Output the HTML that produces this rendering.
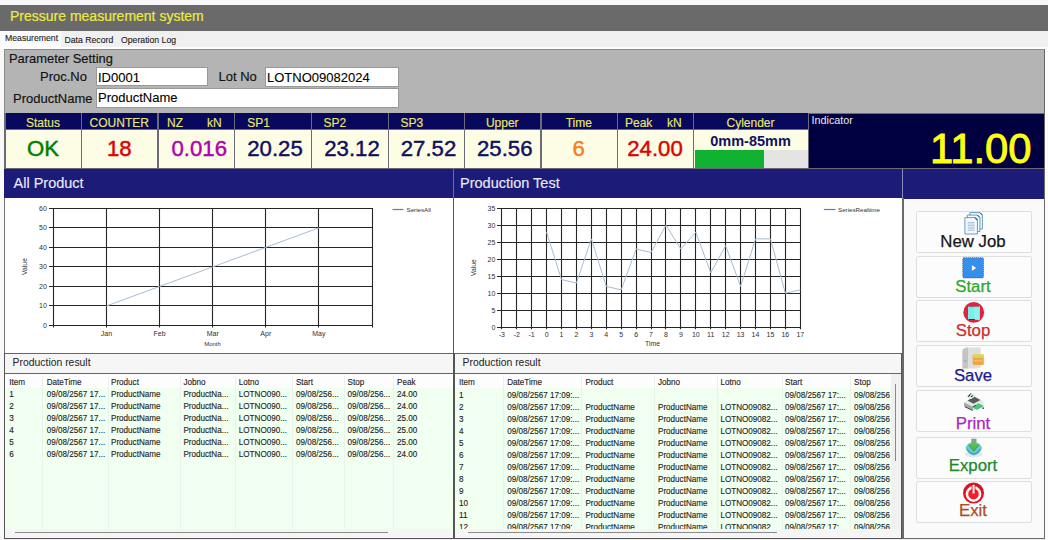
<!DOCTYPE html>
<html><head><meta charset="utf-8">
<style>
*{margin:0;padding:0;box-sizing:border-box}
html,body{width:1048px;height:540px;overflow:hidden;background:#f0f0f0;font-family:"Liberation Sans",sans-serif;position:relative}
.a{position:absolute;white-space:nowrap}
.t{position:absolute;white-space:nowrap;line-height:1}
svg text{font-family:"Liberation Sans",sans-serif}
.tt{position:absolute;white-space:nowrap;line-height:1;font-size:8.1px;color:#1e1e1e;-webkit-text-stroke:0.12px currentColor;transform:scaleY(1.15);transform-origin:0 0}
</style></head><body>
<!-- top strip -->
<div class="a" style="left:0;top:0;width:1048px;height:5px;background:#f7f7f7"></div>
<!-- title bar -->
<div class="a" style="left:0;top:5px;width:1048px;height:26px;background:#6a6a6a"></div>
<div class="t" style="left:10px;top:9px;font-size:14px;-webkit-text-stroke:0.2px currentColor;color:#eaea44">Pressure measurement system</div>
<!-- tabs -->
<div class="a" style="left:0;top:31px;width:1048px;height:17px;background:#f0f0f0"></div>
<div class="a" style="left:0;top:31px;width:61px;height:16px;background:#fbfbfb"></div>
<div class="t" style="left:5px;top:34px;font-size:8.7px;-webkit-text-stroke:0.1px currentColor;color:#1a1a1a">Measurement</div>
<div class="t" style="left:64.5px;top:35.5px;font-size:8.7px;-webkit-text-stroke:0.1px currentColor;color:#1a1a1a">Data Record</div>
<div class="t" style="left:121px;top:35.5px;font-size:8.7px;-webkit-text-stroke:0.1px currentColor;color:#1a1a1a">Operation Log</div>
<!-- main gray panel -->
<div class="a" style="left:0;top:47px;width:1048px;height:1.5px;background:#fdfdfd"></div>
<div class="a" style="left:0;top:48px;width:4px;height:492px;background:#f9f9f9"></div>
<div class="a" style="left:4px;top:48.8px;width:1041px;height:490.2px;background:#b4b4b4;border:1px solid #8a8a8a;border-right-color:#666"></div>
<div class="a" style="left:1045px;top:48px;width:3px;height:492px;background:#fcfcfc"></div>
<div class="t" style="left:9px;top:53px;font-size:12.9px;-webkit-text-stroke:0.15px currentColor;color:#111">Parameter Setting</div>
<div class="t" style="right:961px;top:69.7px;font-size:13px;-webkit-text-stroke:0.15px currentColor;color:#111">Proc.No</div>
<div class="a" style="left:96px;top:67px;width:112px;height:19px;background:#fff;border:1px solid #999"></div>
<div class="t" style="left:98px;top:70.6px;font-size:13px;-webkit-text-stroke:0.1px currentColor;color:#000">ID0001</div>
<div class="t" style="left:218.5px;top:69.5px;font-size:13px;-webkit-text-stroke:0.15px currentColor;color:#111">Lot No</div>
<div class="a" style="left:265px;top:67px;width:134px;height:20px;background:#fff;border:1px solid #999"></div>
<div class="t" style="left:267px;top:70.6px;font-size:13px;-webkit-text-stroke:0.1px currentColor;color:#000">LOTNO09082024</div>
<div class="t" style="left:13px;top:92px;font-size:13px;-webkit-text-stroke:0.15px currentColor;color:#111">ProductName</div>
<div class="a" style="left:96px;top:88px;width:303px;height:20px;background:#fff;border:1px solid #999"></div>
<div class="t" style="left:98px;top:91.3px;font-size:13px;-webkit-text-stroke:0.1px currentColor;color:#000">ProductName</div>
<!-- status row -->
<div class="a" style="left:4px;top:113px;width:1040px;height:56px;background:#6a6a78"></div>
<div class="a" style="left:6px;top:113px;width:74.5px;height:16px;background:#08085c"></div>
<div class="t" style="left:5px;top:116.5px;width:76px;text-align:center;font-size:12px;-webkit-text-stroke:0.15px currentColor;color:#e8e866">Status</div>
<div class="a" style="left:6px;top:130px;width:74.5px;height:38px;background:#fdfde6"></div>
<div class="t" style="left:5px;top:137.5px;width:76px;text-align:center;font-size:22.2px;-webkit-text-stroke:0.45px currentColor;color:#008000">OK</div>
<div class="a" style="left:82px;top:113px;width:75.0px;height:16px;background:#08085c"></div>
<div class="t" style="left:81px;top:116.5px;width:76.5px;text-align:center;font-size:12px;-webkit-text-stroke:0.15px currentColor;color:#e8e866">COUNTER</div>
<div class="a" style="left:82px;top:130px;width:75.0px;height:38px;background:#fdfde6"></div>
<div class="t" style="left:81px;top:137.5px;width:76.5px;text-align:center;font-size:22.2px;-webkit-text-stroke:0.45px currentColor;color:#e00000">18</div>
<div class="a" style="left:158.5px;top:113px;width:75.0px;height:16px;background:#08085c"></div>
<div class="a" style="left:158.5px;top:130px;width:75.0px;height:38px;background:#fdfde6"></div>
<div class="t" style="left:161px;top:137.5px;width:76.5px;text-align:center;font-size:22.2px;-webkit-text-stroke:0.45px currentColor;color:#b000b0">0.016</div>
<div class="a" style="left:235px;top:113px;width:75.5px;height:16px;background:#08085c"></div>
<div class="t" style="left:247.3px;top:116.5px;font-size:12px;-webkit-text-stroke:0.15px currentColor;color:#e8e866">SP1</div>
<div class="a" style="left:235px;top:130px;width:75.5px;height:38px;background:#fdfde6"></div>
<div class="t" style="left:236.5px;top:137.5px;width:77px;text-align:center;font-size:22.2px;-webkit-text-stroke:0.45px currentColor;color:#101060">20.25</div>
<div class="a" style="left:312px;top:113px;width:75.5px;height:16px;background:#08085c"></div>
<div class="t" style="left:323.5px;top:116.5px;font-size:12px;-webkit-text-stroke:0.15px currentColor;color:#e8e866">SP2</div>
<div class="a" style="left:312px;top:130px;width:75.5px;height:38px;background:#fdfde6"></div>
<div class="t" style="left:313.5px;top:137.5px;width:77px;text-align:center;font-size:22.2px;-webkit-text-stroke:0.45px currentColor;color:#101060">23.12</div>
<div class="a" style="left:389px;top:113px;width:74.5px;height:16px;background:#08085c"></div>
<div class="t" style="left:400.5px;top:116.5px;font-size:12px;-webkit-text-stroke:0.15px currentColor;color:#e8e866">SP3</div>
<div class="a" style="left:389px;top:130px;width:74.5px;height:38px;background:#fdfde6"></div>
<div class="t" style="left:390.5px;top:137.5px;width:76px;text-align:center;font-size:22.2px;-webkit-text-stroke:0.45px currentColor;color:#101060">27.52</div>
<div class="a" style="left:465px;top:113px;width:75.0px;height:16px;background:#08085c"></div>
<div class="t" style="left:464px;top:116.5px;width:76.5px;text-align:center;font-size:12px;-webkit-text-stroke:0.15px currentColor;color:#e8e866">Upper</div>
<div class="a" style="left:465px;top:130px;width:75.0px;height:38px;background:#fdfde6"></div>
<div class="t" style="left:466.5px;top:137.5px;width:76.5px;text-align:center;font-size:22.2px;-webkit-text-stroke:0.45px currentColor;color:#101060">25.56</div>
<div class="a" style="left:541.5px;top:113px;width:75.0px;height:16px;background:#08085c"></div>
<div class="t" style="left:540.5px;top:116.5px;width:76.5px;text-align:center;font-size:12px;-webkit-text-stroke:0.15px currentColor;color:#e8e866">Time</div>
<div class="a" style="left:541.5px;top:130px;width:75.0px;height:38px;background:#fdfde6"></div>
<div class="t" style="left:540.5px;top:137.5px;width:76.5px;text-align:center;font-size:22.2px;-webkit-text-stroke:0.45px currentColor;color:#f08020">6</div>
<div class="a" style="left:618px;top:113px;width:74.5px;height:16px;background:#08085c"></div>
<div class="a" style="left:618px;top:130px;width:74.5px;height:38px;background:#fdfde6"></div>
<div class="t" style="left:617px;top:137.5px;width:76px;text-align:center;font-size:22.2px;-webkit-text-stroke:0.45px currentColor;color:#e00000">24.00</div>
<div class="t" style="left:167px;top:116.5px;font-size:12px;-webkit-text-stroke:0.15px currentColor;color:#e8e866">NZ</div>
<div class="t" style="left:207px;top:116.5px;font-size:12px;-webkit-text-stroke:0.15px currentColor;color:#e8e866">kN</div>
<div class="t" style="left:625px;top:116.5px;font-size:12px;-webkit-text-stroke:0.15px currentColor;color:#e8e866">Peak</div>
<div class="t" style="left:667px;top:116.5px;font-size:12px;-webkit-text-stroke:0.15px currentColor;color:#e8e866">kN</div>
<div class="a" style="left:694px;top:113px;width:113.5px;height:16px;background:#08085c"></div>
<div class="t" style="left:693px;top:116.5px;width:115px;text-align:center;font-size:12px;-webkit-text-stroke:0.15px currentColor;color:#e8e866">Cylender</div>
<div class="a" style="left:694px;top:130px;width:113.5px;height:38px;background:#fdfde6"></div>
<div class="t" style="left:693px;top:134px;width:115px;text-align:center;font-size:14.5px;font-weight:bold;color:#101060">0mm-85mm</div>
<div class="a" style="left:694.5px;top:149.5px;width:113px;height:18px;background:#e4e4e4"></div>
<div class="a" style="left:694.5px;top:149.5px;width:69.5px;height:18px;background:#10b030"></div>
<div class="a" style="left:808.5px;top:113.5px;width:235.5px;height:54.5px;background:#000040"></div>
<div class="t" style="left:811.5px;top:115px;font-size:10.8px;color:#e8e8f0">Indicator</div>
<div class="t" style="left:930px;top:128.3px;font-size:41.8px;-webkit-text-stroke:0.9px currentColor;color:#ffff10">11.00</div>
<!-- blue bars -->
<div class="a" style="left:4px;top:169px;width:1040px;height:29.5px;background:#1c1c78"></div>
<div class="a" style="left:453px;top:169px;width:1px;height:29.5px;background:#6a6aa8"></div>
<div class="a" style="left:902px;top:169px;width:1px;height:29.5px;background:#8a8ab8"></div>
<div class="t" style="left:13.5px;top:176px;font-size:14.5px;-webkit-text-stroke:0.15px currentColor;color:#e8e8f4">All Product</div>
<div class="t" style="left:460px;top:176px;font-size:14.5px;-webkit-text-stroke:0.15px currentColor;color:#e8e8f4">Production Test</div>
<div class="a" style="left:4px;top:198.4px;width:449.5px;height:155.6px;background:#fff;border-left:1px solid #777"></div>
<div class="a" style="left:453px;top:198.4px;width:449.5px;height:155.6px;background:#fff;border-left:1px solid #555;border-right:1px solid #777"></div>
<svg class="a" style="left:0;top:0" width="1048" height="540">
<line x1="49.00" y1="208.50" x2="373.00" y2="208.50" stroke="#262626" stroke-width="1.1"/>
<line x1="49.00" y1="227.50" x2="373.00" y2="227.50" stroke="#262626" stroke-width="1.1"/>
<line x1="49.00" y1="247.50" x2="373.00" y2="247.50" stroke="#262626" stroke-width="1.1"/>
<line x1="49.00" y1="266.50" x2="373.00" y2="266.50" stroke="#262626" stroke-width="1.1"/>
<line x1="49.00" y1="286.50" x2="373.00" y2="286.50" stroke="#262626" stroke-width="1.1"/>
<line x1="49.00" y1="305.50" x2="373.00" y2="305.50" stroke="#262626" stroke-width="1.1"/>
<line x1="49.00" y1="325.50" x2="373.00" y2="325.50" stroke="#262626" stroke-width="1.1"/>
<line x1="53.50" y1="208.00" x2="53.50" y2="327.50" stroke="#262626" stroke-width="1.1"/>
<line x1="106.50" y1="208.00" x2="106.50" y2="327.50" stroke="#262626" stroke-width="1.1"/>
<line x1="159.50" y1="208.00" x2="159.50" y2="327.50" stroke="#262626" stroke-width="1.1"/>
<line x1="212.50" y1="208.00" x2="212.50" y2="327.50" stroke="#262626" stroke-width="1.1"/>
<line x1="265.50" y1="208.00" x2="265.50" y2="327.50" stroke="#262626" stroke-width="1.1"/>
<line x1="318.50" y1="208.00" x2="318.50" y2="327.50" stroke="#262626" stroke-width="1.1"/>
<line x1="372.50" y1="208.00" x2="372.50" y2="327.50" stroke="#262626" stroke-width="1.1"/>
<text x="46.90" y="328.00" text-anchor="end" font-size="7" fill="#303030">0</text>
<text x="46.90" y="308.47" text-anchor="end" font-size="7" fill="#303030">10</text>
<text x="46.90" y="288.93" text-anchor="end" font-size="7" fill="#303030">20</text>
<text x="46.90" y="269.40" text-anchor="end" font-size="7" fill="#303030">30</text>
<text x="46.90" y="249.87" text-anchor="end" font-size="7" fill="#303030">40</text>
<text x="46.90" y="230.33" text-anchor="end" font-size="7" fill="#303030">50</text>
<text x="46.90" y="210.80" text-anchor="end" font-size="7" fill="#303030">60</text>
<text x="106.50" y="335.50" text-anchor="middle" font-size="7" fill="#303030">Jan</text>
<text x="159.60" y="335.50" text-anchor="middle" font-size="7" fill="#303030">Feb</text>
<text x="212.70" y="335.50" text-anchor="middle" font-size="7" fill="#303030">Mar</text>
<text x="265.80" y="335.50" text-anchor="middle" font-size="7" fill="#303030">Apr</text>
<text x="318.90" y="335.50" text-anchor="middle" font-size="7" fill="#303030">May</text>
<text x="212.50" y="345.50" text-anchor="middle" font-size="6" fill="#303030">Month</text>
<text x="25.00" y="266.50" text-anchor="middle" font-size="6.8" fill="#303030" transform="rotate(-90 25.00 266.50)" dy="2">Value</text>
<polyline points="106.50,305.97 159.60,286.43 212.70,266.90 265.80,247.37 318.90,227.83" fill="none" stroke="#a8bcd0" stroke-width="1"/>
<line x1="392.5" y1="209.5" x2="403.5" y2="209.5" stroke="#4f81bd" stroke-width="1.2"/>
<text x="406.5" y="211.8" font-size="6.2" fill="#303030">SeriesAll</text>
</svg>
<svg class="a" style="left:0;top:0" width="1048" height="540">
<line x1="497.00" y1="208.50" x2="801.00" y2="208.50" stroke="#262626" stroke-width="1.1"/>
<line x1="497.00" y1="225.50" x2="801.00" y2="225.50" stroke="#262626" stroke-width="1.1"/>
<line x1="497.00" y1="242.50" x2="801.00" y2="242.50" stroke="#262626" stroke-width="1.1"/>
<line x1="497.00" y1="259.50" x2="801.00" y2="259.50" stroke="#262626" stroke-width="1.1"/>
<line x1="497.00" y1="276.50" x2="801.00" y2="276.50" stroke="#262626" stroke-width="1.1"/>
<line x1="497.00" y1="293.50" x2="801.00" y2="293.50" stroke="#262626" stroke-width="1.1"/>
<line x1="497.00" y1="310.50" x2="801.00" y2="310.50" stroke="#262626" stroke-width="1.1"/>
<line x1="497.00" y1="327.50" x2="801.00" y2="327.50" stroke="#262626" stroke-width="1.1"/>
<line x1="501.50" y1="208.00" x2="501.50" y2="329.20" stroke="#262626" stroke-width="1.1"/>
<line x1="516.50" y1="208.00" x2="516.50" y2="329.20" stroke="#262626" stroke-width="1.1"/>
<line x1="531.50" y1="208.00" x2="531.50" y2="329.20" stroke="#262626" stroke-width="1.1"/>
<line x1="546.50" y1="208.00" x2="546.50" y2="329.20" stroke="#262626" stroke-width="1.1"/>
<line x1="561.50" y1="208.00" x2="561.50" y2="329.20" stroke="#262626" stroke-width="1.1"/>
<line x1="576.50" y1="208.00" x2="576.50" y2="329.20" stroke="#262626" stroke-width="1.1"/>
<line x1="591.50" y1="208.00" x2="591.50" y2="329.20" stroke="#262626" stroke-width="1.1"/>
<line x1="606.50" y1="208.00" x2="606.50" y2="329.20" stroke="#262626" stroke-width="1.1"/>
<line x1="621.50" y1="208.00" x2="621.50" y2="329.20" stroke="#262626" stroke-width="1.1"/>
<line x1="636.50" y1="208.00" x2="636.50" y2="329.20" stroke="#262626" stroke-width="1.1"/>
<line x1="651.50" y1="208.00" x2="651.50" y2="329.20" stroke="#262626" stroke-width="1.1"/>
<line x1="665.50" y1="208.00" x2="665.50" y2="329.20" stroke="#262626" stroke-width="1.1"/>
<line x1="680.50" y1="208.00" x2="680.50" y2="329.20" stroke="#262626" stroke-width="1.1"/>
<line x1="695.50" y1="208.00" x2="695.50" y2="329.20" stroke="#262626" stroke-width="1.1"/>
<line x1="710.50" y1="208.00" x2="710.50" y2="329.20" stroke="#262626" stroke-width="1.1"/>
<line x1="725.50" y1="208.00" x2="725.50" y2="329.20" stroke="#262626" stroke-width="1.1"/>
<line x1="740.50" y1="208.00" x2="740.50" y2="329.20" stroke="#262626" stroke-width="1.1"/>
<line x1="755.50" y1="208.00" x2="755.50" y2="329.20" stroke="#262626" stroke-width="1.1"/>
<line x1="770.50" y1="208.00" x2="770.50" y2="329.20" stroke="#262626" stroke-width="1.1"/>
<line x1="785.50" y1="208.00" x2="785.50" y2="329.20" stroke="#262626" stroke-width="1.1"/>
<line x1="800.50" y1="208.00" x2="800.50" y2="329.20" stroke="#262626" stroke-width="1.1"/>
<text x="495.30" y="329.70" text-anchor="end" font-size="7" fill="#303030">0</text>
<text x="495.30" y="312.71" text-anchor="end" font-size="7" fill="#303030">5</text>
<text x="495.30" y="295.73" text-anchor="end" font-size="7" fill="#303030">10</text>
<text x="495.30" y="278.74" text-anchor="end" font-size="7" fill="#303030">15</text>
<text x="495.30" y="261.76" text-anchor="end" font-size="7" fill="#303030">20</text>
<text x="495.30" y="244.77" text-anchor="end" font-size="7" fill="#303030">25</text>
<text x="495.30" y="227.79" text-anchor="end" font-size="7" fill="#303030">30</text>
<text x="495.30" y="210.80" text-anchor="end" font-size="7" fill="#303030">35</text>
<text x="501.80" y="337.20" text-anchor="middle" font-size="7" fill="#303030">-3</text>
<text x="516.73" y="337.20" text-anchor="middle" font-size="7" fill="#303030">-2</text>
<text x="531.65" y="337.20" text-anchor="middle" font-size="7" fill="#303030">-1</text>
<text x="546.58" y="337.20" text-anchor="middle" font-size="7" fill="#303030">0</text>
<text x="561.50" y="337.20" text-anchor="middle" font-size="7" fill="#303030">1</text>
<text x="576.42" y="337.20" text-anchor="middle" font-size="7" fill="#303030">2</text>
<text x="591.35" y="337.20" text-anchor="middle" font-size="7" fill="#303030">3</text>
<text x="606.27" y="337.20" text-anchor="middle" font-size="7" fill="#303030">4</text>
<text x="621.20" y="337.20" text-anchor="middle" font-size="7" fill="#303030">5</text>
<text x="636.12" y="337.20" text-anchor="middle" font-size="7" fill="#303030">6</text>
<text x="651.05" y="337.20" text-anchor="middle" font-size="7" fill="#303030">7</text>
<text x="665.97" y="337.20" text-anchor="middle" font-size="7" fill="#303030">8</text>
<text x="680.90" y="337.20" text-anchor="middle" font-size="7" fill="#303030">9</text>
<text x="695.83" y="337.20" text-anchor="middle" font-size="7" fill="#303030">10</text>
<text x="710.75" y="337.20" text-anchor="middle" font-size="7" fill="#303030">11</text>
<text x="725.67" y="337.20" text-anchor="middle" font-size="7" fill="#303030">12</text>
<text x="740.60" y="337.20" text-anchor="middle" font-size="7" fill="#303030">13</text>
<text x="755.52" y="337.20" text-anchor="middle" font-size="7" fill="#303030">14</text>
<text x="770.45" y="337.20" text-anchor="middle" font-size="7" fill="#303030">15</text>
<text x="785.38" y="337.20" text-anchor="middle" font-size="7" fill="#303030">16</text>
<text x="800.30" y="337.20" text-anchor="middle" font-size="7" fill="#303030">17</text>
<text x="652.50" y="346.20" text-anchor="middle" font-size="6.8" fill="#303030">Time</text>
<text x="474.00" y="267.60" text-anchor="middle" font-size="6.8" fill="#303030" transform="rotate(-90 474.00 267.60)" dy="2">Value</text>
<polyline points="546.58,232.08 561.50,279.64 576.42,283.04 591.35,238.87 606.27,286.43 621.20,289.83 636.12,249.07 651.05,252.46 665.97,225.29 680.90,249.07 695.83,232.08 710.75,272.85 725.67,245.67 740.60,286.43 755.52,238.87 770.45,238.87 785.38,293.23 800.30,289.83" fill="none" stroke="#a8bcd0" stroke-width="1"/>
<line x1="823.8" y1="209.5" x2="835.6" y2="209.5" stroke="#4f81bd" stroke-width="1.2"/>
<text x="838" y="211.8" font-size="6.2" fill="#303030">SeriesRealtime</text>
</svg>
<div class="a" style="left:5px;top:353.5px;width:448px;height:185px;background:#f0fff0"></div>
<div class="a" style="left:5px;top:353.5px;width:448px;height:20px;background:#f6f6f6"></div>
<div class="t" style="left:12.6px;top:357.5px;font-size:10.4px;color:#222">Production result</div>
<div class="a" style="left:5px;top:374px;width:448px;height:13.5px;background:#fdfdfd"></div>
<div class="a" style="left:42.2px;top:375px;width:1px;height:154px;background:#eaf3ea"></div>
<div class="a" style="left:107.8px;top:375px;width:1px;height:154px;background:#eaf3ea"></div>
<div class="a" style="left:179.6px;top:375px;width:1px;height:154px;background:#eaf3ea"></div>
<div class="a" style="left:235.2px;top:375px;width:1px;height:154px;background:#eaf3ea"></div>
<div class="a" style="left:292px;top:375px;width:1px;height:154px;background:#eaf3ea"></div>
<div class="a" style="left:343.8px;top:375px;width:1px;height:154px;background:#eaf3ea"></div>
<div class="a" style="left:393.2px;top:375px;width:1px;height:154px;background:#eaf3ea"></div>
<div class="tt" style="left:9.3px;top:377.5px">Item</div>
<div class="tt" style="left:46.7px;top:377.5px">DateTime</div>
<div class="tt" style="left:111px;top:377.5px">Product</div>
<div class="tt" style="left:183.4px;top:377.5px">Jobno</div>
<div class="tt" style="left:238.8px;top:377.5px">Lotno</div>
<div class="tt" style="left:295.9px;top:377.5px">Start</div>
<div class="tt" style="left:347.6px;top:377.5px">Stop</div>
<div class="tt" style="left:397px;top:377.5px">Peak</div>
<div class="tt" style="left:9.3px;top:390.30px">1</div>
<div class="tt" style="left:46.7px;top:390.30px">09/08/2567 17...</div>
<div class="tt" style="left:111px;top:390.30px">ProductName</div>
<div class="tt" style="left:183.4px;top:390.30px">ProductNa...</div>
<div class="tt" style="left:238.8px;top:390.30px">LOTNO090...</div>
<div class="tt" style="left:295.9px;top:390.30px">09/08/256...</div>
<div class="tt" style="left:347.6px;top:390.30px">09/08/256...</div>
<div class="tt" style="left:397px;top:390.30px">24.00</div>
<div class="tt" style="left:9.3px;top:402.30px">2</div>
<div class="tt" style="left:46.7px;top:402.30px">09/08/2567 17...</div>
<div class="tt" style="left:111px;top:402.30px">ProductName</div>
<div class="tt" style="left:183.4px;top:402.30px">ProductNa...</div>
<div class="tt" style="left:238.8px;top:402.30px">LOTNO090...</div>
<div class="tt" style="left:295.9px;top:402.30px">09/08/256...</div>
<div class="tt" style="left:347.6px;top:402.30px">09/08/256...</div>
<div class="tt" style="left:397px;top:402.30px">24.00</div>
<div class="tt" style="left:9.3px;top:414.30px">3</div>
<div class="tt" style="left:46.7px;top:414.30px">09/08/2567 17...</div>
<div class="tt" style="left:111px;top:414.30px">ProductName</div>
<div class="tt" style="left:183.4px;top:414.30px">ProductNa...</div>
<div class="tt" style="left:238.8px;top:414.30px">LOTNO090...</div>
<div class="tt" style="left:295.9px;top:414.30px">09/08/256...</div>
<div class="tt" style="left:347.6px;top:414.30px">09/08/256...</div>
<div class="tt" style="left:397px;top:414.30px">25.00</div>
<div class="tt" style="left:9.3px;top:426.30px">4</div>
<div class="tt" style="left:46.7px;top:426.30px">09/08/2567 17...</div>
<div class="tt" style="left:111px;top:426.30px">ProductName</div>
<div class="tt" style="left:183.4px;top:426.30px">ProductNa...</div>
<div class="tt" style="left:238.8px;top:426.30px">LOTNO090...</div>
<div class="tt" style="left:295.9px;top:426.30px">09/08/256...</div>
<div class="tt" style="left:347.6px;top:426.30px">09/08/256...</div>
<div class="tt" style="left:397px;top:426.30px">25.00</div>
<div class="tt" style="left:9.3px;top:438.30px">5</div>
<div class="tt" style="left:46.7px;top:438.30px">09/08/2567 17...</div>
<div class="tt" style="left:111px;top:438.30px">ProductName</div>
<div class="tt" style="left:183.4px;top:438.30px">ProductNa...</div>
<div class="tt" style="left:238.8px;top:438.30px">LOTNO090...</div>
<div class="tt" style="left:295.9px;top:438.30px">09/08/256...</div>
<div class="tt" style="left:347.6px;top:438.30px">09/08/256...</div>
<div class="tt" style="left:397px;top:438.30px">25.00</div>
<div class="tt" style="left:9.3px;top:450.30px">6</div>
<div class="tt" style="left:46.7px;top:450.30px">09/08/2567 17...</div>
<div class="tt" style="left:111px;top:450.30px">ProductName</div>
<div class="tt" style="left:183.4px;top:450.30px">ProductNa...</div>
<div class="tt" style="left:238.8px;top:450.30px">LOTNO090...</div>
<div class="tt" style="left:295.9px;top:450.30px">09/08/256...</div>
<div class="tt" style="left:347.6px;top:450.30px">09/08/256...</div>
<div class="tt" style="left:397px;top:450.30px">24.00</div>
<div class="a" style="left:5px;top:353px;width:448px;height:1px;background:#666"></div>
<div class="a" style="left:5px;top:373px;width:448px;height:1px;background:#666"></div>
<div class="a" style="left:5px;top:528.5px;width:448px;height:9px;background:#f5f5f5"></div>
<div class="a" style="left:15px;top:532px;width:373px;height:1.2px;background:#8a8a8a"></div>
<div class="a" style="left:455px;top:353.5px;width:446px;height:185px;background:#f0fff0"></div>
<div class="a" style="left:455px;top:353.5px;width:446px;height:20px;background:#f6f6f6"></div>
<div class="t" style="left:462.6px;top:357.5px;font-size:10.4px;color:#222">Production result</div>
<div class="a" style="left:455px;top:374px;width:446px;height:13.5px;background:#fdfdfd"></div>
<div class="a" style="left:503px;top:375px;width:1px;height:154px;background:#eaf3ea"></div>
<div class="a" style="left:581.2px;top:375px;width:1px;height:154px;background:#eaf3ea"></div>
<div class="a" style="left:654.2px;top:375px;width:1px;height:154px;background:#eaf3ea"></div>
<div class="a" style="left:716.5px;top:375px;width:1px;height:154px;background:#eaf3ea"></div>
<div class="a" style="left:781.7px;top:375px;width:1px;height:154px;background:#eaf3ea"></div>
<div class="a" style="left:850px;top:375px;width:1px;height:154px;background:#eaf3ea"></div>
<div class="tt" style="left:459px;top:377.8px">Item</div>
<div class="tt" style="left:507.2px;top:377.8px">DateTime</div>
<div class="tt" style="left:585.4px;top:377.8px">Product</div>
<div class="tt" style="left:658px;top:377.8px">Jobno</div>
<div class="tt" style="left:720.4px;top:377.8px">Lotno</div>
<div class="tt" style="left:785.1px;top:377.8px">Start</div>
<div class="tt" style="left:854px;top:377.8px">Stop</div>
<div class="tt" style="left:459px;top:390.70px">1</div>
<div class="tt" style="left:507.2px;top:390.70px">09/08/2567 17:09:...</div>
<div class="tt" style="left:785.1px;top:390.70px">09/08/2567 17:...</div>
<div class="tt" style="left:854px;top:390.70px">09/08/256</div>
<div class="tt" style="left:459px;top:402.70px">2</div>
<div class="tt" style="left:507.2px;top:402.70px">09/08/2567 17:09:...</div>
<div class="tt" style="left:585.4px;top:402.70px">ProductName</div>
<div class="tt" style="left:658px;top:402.70px">ProductName</div>
<div class="tt" style="left:720.4px;top:402.70px">LOTNO09082...</div>
<div class="tt" style="left:785.1px;top:402.70px">09/08/2567 17:...</div>
<div class="tt" style="left:854px;top:402.70px">09/08/256</div>
<div class="tt" style="left:459px;top:414.70px">3</div>
<div class="tt" style="left:507.2px;top:414.70px">09/08/2567 17:09:...</div>
<div class="tt" style="left:585.4px;top:414.70px">ProductName</div>
<div class="tt" style="left:658px;top:414.70px">ProductName</div>
<div class="tt" style="left:720.4px;top:414.70px">LOTNO09082...</div>
<div class="tt" style="left:785.1px;top:414.70px">09/08/2567 17:...</div>
<div class="tt" style="left:854px;top:414.70px">09/08/256</div>
<div class="tt" style="left:459px;top:426.70px">4</div>
<div class="tt" style="left:507.2px;top:426.70px">09/08/2567 17:09:...</div>
<div class="tt" style="left:585.4px;top:426.70px">ProductName</div>
<div class="tt" style="left:658px;top:426.70px">ProductName</div>
<div class="tt" style="left:720.4px;top:426.70px">LOTNO09082...</div>
<div class="tt" style="left:785.1px;top:426.70px">09/08/2567 17:...</div>
<div class="tt" style="left:854px;top:426.70px">09/08/256</div>
<div class="tt" style="left:459px;top:438.70px">5</div>
<div class="tt" style="left:507.2px;top:438.70px">09/08/2567 17:09:...</div>
<div class="tt" style="left:585.4px;top:438.70px">ProductName</div>
<div class="tt" style="left:658px;top:438.70px">ProductName</div>
<div class="tt" style="left:720.4px;top:438.70px">LOTNO09082...</div>
<div class="tt" style="left:785.1px;top:438.70px">09/08/2567 17:...</div>
<div class="tt" style="left:854px;top:438.70px">09/08/256</div>
<div class="tt" style="left:459px;top:450.70px">6</div>
<div class="tt" style="left:507.2px;top:450.70px">09/08/2567 17:09:...</div>
<div class="tt" style="left:585.4px;top:450.70px">ProductName</div>
<div class="tt" style="left:658px;top:450.70px">ProductName</div>
<div class="tt" style="left:720.4px;top:450.70px">LOTNO09082...</div>
<div class="tt" style="left:785.1px;top:450.70px">09/08/2567 17:...</div>
<div class="tt" style="left:854px;top:450.70px">09/08/256</div>
<div class="tt" style="left:459px;top:462.70px">7</div>
<div class="tt" style="left:507.2px;top:462.70px">09/08/2567 17:09:...</div>
<div class="tt" style="left:585.4px;top:462.70px">ProductName</div>
<div class="tt" style="left:658px;top:462.70px">ProductName</div>
<div class="tt" style="left:720.4px;top:462.70px">LOTNO09082...</div>
<div class="tt" style="left:785.1px;top:462.70px">09/08/2567 17:...</div>
<div class="tt" style="left:854px;top:462.70px">09/08/256</div>
<div class="tt" style="left:459px;top:474.70px">8</div>
<div class="tt" style="left:507.2px;top:474.70px">09/08/2567 17:09:...</div>
<div class="tt" style="left:585.4px;top:474.70px">ProductName</div>
<div class="tt" style="left:658px;top:474.70px">ProductName</div>
<div class="tt" style="left:720.4px;top:474.70px">LOTNO09082...</div>
<div class="tt" style="left:785.1px;top:474.70px">09/08/2567 17:...</div>
<div class="tt" style="left:854px;top:474.70px">09/08/256</div>
<div class="tt" style="left:459px;top:486.70px">9</div>
<div class="tt" style="left:507.2px;top:486.70px">09/08/2567 17:09:...</div>
<div class="tt" style="left:585.4px;top:486.70px">ProductName</div>
<div class="tt" style="left:658px;top:486.70px">ProductName</div>
<div class="tt" style="left:720.4px;top:486.70px">LOTNO09082...</div>
<div class="tt" style="left:785.1px;top:486.70px">09/08/2567 17:...</div>
<div class="tt" style="left:854px;top:486.70px">09/08/256</div>
<div class="tt" style="left:459px;top:498.70px">10</div>
<div class="tt" style="left:507.2px;top:498.70px">09/08/2567 17:09:...</div>
<div class="tt" style="left:585.4px;top:498.70px">ProductName</div>
<div class="tt" style="left:658px;top:498.70px">ProductName</div>
<div class="tt" style="left:720.4px;top:498.70px">LOTNO09082...</div>
<div class="tt" style="left:785.1px;top:498.70px">09/08/2567 17:...</div>
<div class="tt" style="left:854px;top:498.70px">09/08/256</div>
<div class="tt" style="left:459px;top:510.70px">11</div>
<div class="tt" style="left:507.2px;top:510.70px">09/08/2567 17:09:...</div>
<div class="tt" style="left:585.4px;top:510.70px">ProductName</div>
<div class="tt" style="left:658px;top:510.70px">ProductName</div>
<div class="tt" style="left:720.4px;top:510.70px">LOTNO09082...</div>
<div class="tt" style="left:785.1px;top:510.70px">09/08/2567 17:...</div>
<div class="tt" style="left:854px;top:510.70px">09/08/256</div>
<div class="tt" style="left:459px;top:522.70px">12</div>
<div class="tt" style="left:507.2px;top:522.70px">09/08/2567 17:09:...</div>
<div class="tt" style="left:585.4px;top:522.70px">ProductName</div>
<div class="tt" style="left:658px;top:522.70px">ProductName</div>
<div class="tt" style="left:720.4px;top:522.70px">LOTNO09082...</div>
<div class="tt" style="left:785.1px;top:522.70px">09/08/2567 17:...</div>
<div class="tt" style="left:854px;top:522.70px">09/08/256</div>
<div class="a" style="left:455px;top:353px;width:446px;height:1px;background:#666"></div>
<div class="a" style="left:455px;top:373px;width:446px;height:1px;background:#666"></div>
<div class="a" style="left:455px;top:528.5px;width:446px;height:9px;background:#f5f5f5"></div>
<div class="a" style="left:468px;top:532px;width:309px;height:1.2px;background:#8a8a8a"></div>
<div class="a" style="left:891px;top:374px;width:10px;height:155px;background:#f0f0f0"></div>
<div class="a" style="left:895.2px;top:384px;width:1.2px;height:77px;background:#8a8a8a"></div>
<div class="a" style="left:455px;top:528.5px;width:446px;height:9px;background:#f5f5f5"></div>
<div class="a" style="left:468px;top:532px;width:309px;height:1.2px;background:#8a8a8a"></div>
<div class="a" style="left:4px;top:353px;width:1px;height:186px;background:#555"></div>
<div class="a" style="left:453px;top:198px;width:1px;height:155px;background:#555"></div>
<div class="a" style="left:453px;top:353px;width:2px;height:186px;background:#555"></div>
<div class="a" style="left:901px;top:353px;width:1.5px;height:186px;background:#555"></div>
<div class="a" style="left:4px;top:537.5px;width:898px;height:1.5px;background:#555"></div>
<div class="a" style="left:903px;top:198.5px;width:141px;height:340px;background:#fafafa"></div>
<div class="a" style="left:902px;top:198px;width:1.5px;height:341px;background:#6a6a6a"></div>
<div class="a" style="left:1043.5px;top:169px;width:1.5px;height:370px;background:#6a6a6a"></div>
<div class="a" style="left:902px;top:537.5px;width:143px;height:1.5px;background:#6a6a6a"></div>
<div class="a" style="left:916px;top:211px;width:116px;height:42px;background:#fcfcfc;border:1px solid #dedede;border-radius:2px"></div>
<div class="t" style="left:915px;top:233.78px;width:116px;text-align:center;font-size:16.8px;-webkit-text-stroke:0.25px currentColor;color:#161616">New Job</div>
<div class="a" style="left:916px;top:255.6px;width:116px;height:42px;background:#fcfcfc;border:1px solid #dedede;border-radius:2px"></div>
<div class="t" style="left:915px;top:278.88px;width:116px;text-align:center;font-size:16.8px;-webkit-text-stroke:0.25px currentColor;color:#2aa82a">Start</div>
<div class="a" style="left:916px;top:300.2px;width:116px;height:42px;background:#fcfcfc;border:1px solid #dedede;border-radius:2px"></div>
<div class="t" style="left:915px;top:322.98px;width:116px;text-align:center;font-size:16.8px;-webkit-text-stroke:0.25px currentColor;color:#d02a2a">Stop</div>
<div class="a" style="left:916px;top:345px;width:116px;height:42px;background:#fcfcfc;border:1px solid #dedede;border-radius:2px"></div>
<div class="t" style="left:915px;top:367.98px;width:116px;text-align:center;font-size:16.8px;-webkit-text-stroke:0.25px currentColor;color:#1a1a8c">Save</div>
<div class="a" style="left:916px;top:390.2px;width:116px;height:42px;background:#fcfcfc;border:1px solid #dedede;border-radius:2px"></div>
<div class="t" style="left:915px;top:415.58px;width:116px;text-align:center;font-size:16.8px;-webkit-text-stroke:0.25px currentColor;color:#ac26c6">Print</div>
<div class="a" style="left:916px;top:437.2px;width:116px;height:42px;background:#fcfcfc;border:1px solid #dedede;border-radius:2px"></div>
<div class="t" style="left:915px;top:458.48px;width:116px;text-align:center;font-size:16.8px;-webkit-text-stroke:0.25px currentColor;color:#1a8a2a">Export</div>
<div class="a" style="left:916px;top:480.8px;width:116px;height:42px;background:#fcfcfc;border:1px solid #dedede;border-radius:2px"></div>
<div class="t" style="left:915px;top:502.88px;width:116px;text-align:center;font-size:16.8px;-webkit-text-stroke:0.25px currentColor;color:#ae4c20">Exit</div>

<svg class="a" style="left:0;top:0" width="1048" height="540">
 <!-- new job: stacked docs -->
 <g stroke="#5894ae" stroke-width="0.9" fill="#f2fafe" stroke-linejoin="miter">
  <path d="M969.9 212.6 H980 L982.4 215 V229 H969.9 Z"/>
  <path d="M967.4 215.1 H977.5 L979.9 217.5 V231.5 H967.4 Z"/>
  <path d="M964.9 217.6 H975 L977.4 220 V234 H964.9 Z"/>
 </g>
 <path d="M975 217.6 L977.4 220" stroke="#2a5a70" stroke-width="1.1"/>
 <path d="M977.5 215.1 L979.9 217.5" stroke="#2a5a70" stroke-width="1"/>
 <path d="M980 212.6 L982.4 215" stroke="#2a5a70" stroke-width="1"/>
 <g stroke="#a4b4d4" stroke-width="0.8">
  <line x1="967.7" y1="222.4" x2="974.7" y2="222.4"/>
  <line x1="967.7" y1="224.0" x2="974.7" y2="224.0"/>
  <line x1="967.7" y1="225.6" x2="974.7" y2="225.6"/>
  <line x1="967.7" y1="227.2" x2="974.7" y2="227.2"/>
  <line x1="967.7" y1="228.8" x2="974.7" y2="228.8"/>
  <line x1="967.7" y1="230.4" x2="974.7" y2="230.4"/>
 </g>
 <!-- start -->
 <rect x="962.8" y="257.7" width="20.7" height="20.2" rx="1.2" fill="#3490ec" stroke="#2a5a8a" stroke-width="0.7" stroke-dasharray="1.2 0.8"/>
 <path d="M971.6 264.6 L976.6 268 L971.6 271.4 z" fill="#ffffff" stroke="#3a4a6a" stroke-width="0.4"/>
 <!-- stop -->
 <circle cx="973.7" cy="312.4" r="10.4" fill="#e4203c"/>
 <rect x="968" y="306.3" width="11.7" height="13.4" fill="#78f0ea"/>
 <rect x="974" y="306.3" width="5.7" height="13.4" fill="#8af4f0"/>
 <line x1="968.5" y1="306.6" x2="979.2" y2="306.6" stroke="#a04040" stroke-width="0.7"/>
 <line x1="968.5" y1="319.5" x2="975" y2="319.5" stroke="#203030" stroke-width="0.9"/>
 <!-- save -->
 <path d="M962.5 349.5 L966.5 347.4 L980.6 347.4 L980.6 367.5 L976 368.4 L962.5 368.4 Z" fill="#dedede"/>
 <path d="M962.5 349.5 L966.5 347.4 L968 347.4 L968 368.4 L962.5 368.4 Z" fill="#c4c4c4"/>
 <line x1="964" y1="361" x2="967" y2="361" stroke="#9a9a9a" stroke-width="0.8"/>
 <rect x="972.7" y="354.4" width="11.1" height="10.6" rx="1" fill="#f2a444"/>
 <rect x="972.7" y="354.4" width="11.1" height="2.4" fill="#d4e05a"/>
 <line x1="973.5" y1="357.6" x2="983" y2="357.6" stroke="#f0d060" stroke-width="0.8"/>
 <line x1="974" y1="360.8" x2="982.5" y2="360.8" stroke="#f8c888" stroke-width="0.8"/>
 <!-- print -->
 <path d="M964 402.5 L974.5 396.5 L983.5 401 L983.5 405.5 L973 410.8 L964 406.5 Z" fill="#e8e8e8"/>
 <path d="M964 402.5 L964 406.5 L973 410.8 L973 406.8 Z" fill="#a8a8a8"/>
 <path d="M965 406.8 L972.5 410.4" stroke="#404040" stroke-width="0.9"/>
 <path d="M967.5 400.5 L974.5 396.8 L980.5 400 L973.5 403.8 Z" fill="#5a5a5a"/>
 <path d="M966 396.5 L971.5 393 L976.5 395.5 L971 399 Z" fill="#d4efe4"/>
 <path d="M968 396.5 L970 395.3 M971 396.8 L973 395.6 M969.5 394.6 L971.2 393.6" stroke="#303838" stroke-width="1.1"/>
 <path d="M971.5 407 L978.5 403.2 L984 406 L977 410 Z" fill="#48c878"/>
 <path d="M973 406.8 L976 405.2" stroke="#206040" stroke-width="1"/>
 <circle cx="983.2" cy="408.2" r="0.9" fill="#305080"/>
 <!-- export -->
 <ellipse cx="973.8" cy="454.2" rx="9" ry="3" fill="#e2e8ee"/>
 <path d="M965.5 448 Q967 443.5 971 442.5 L976.5 442.5 Q980.5 443.5 982 448 Q979.5 455 973.8 455.5 Q968 455 965.5 448 Z" fill="#6cc8d4"/>
 <path d="M967 449 Q970 453.5 973.8 453.8 Q977.5 453.5 980.5 449" fill="none" stroke="#2e9ab0" stroke-width="1.2"/>
 <rect x="971.3" y="438.6" width="5.2" height="6" fill="#7aa888"/>
 <path d="M968 444.2 L979.6 444.2 L973.8 451.8 Z" fill="#58c040"/>
 <path d="M969 445 L973.8 451 L978.6 445" fill="none" stroke="#2a8a40" stroke-width="0.7"/>
 <!-- exit -->
 <circle cx="973.5" cy="493" r="10.5" fill="#d81424"/>
 <circle cx="973.5" cy="494" r="6.6" fill="#f0202c" stroke="#fff4f4" stroke-width="2.6"/>
 <rect x="971.6" y="484.8" width="3.8" height="7.5" fill="#d81424"/>
 <rect x="972.5" y="484.8" width="2.1" height="8.6" fill="#ffeeee"/>
</svg>

</body></html>
